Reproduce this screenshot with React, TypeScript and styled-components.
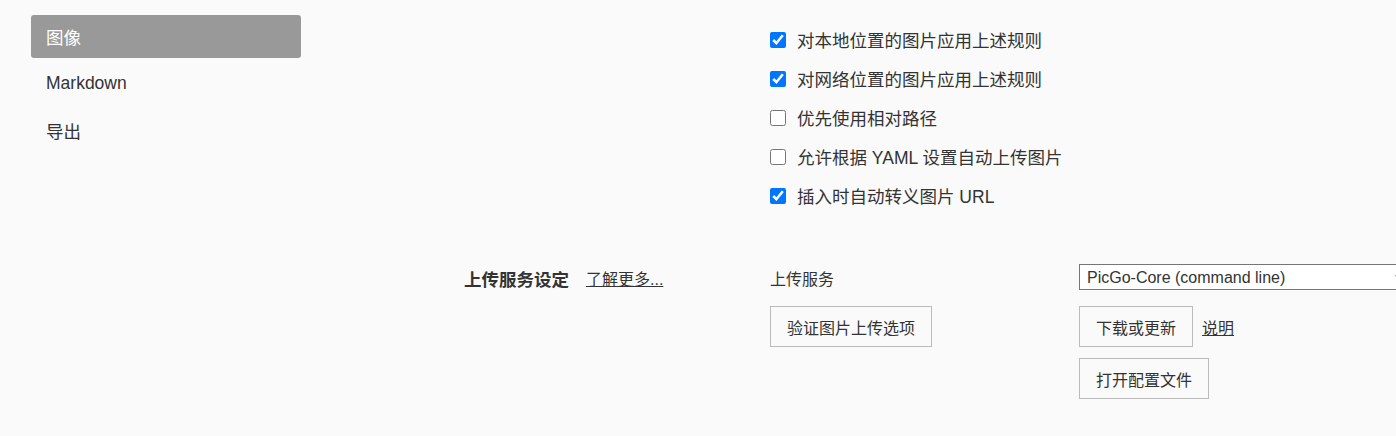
import React from "react";
import styled, { createGlobalStyle } from "styled-components";

const FONT = `"Liberation Sans", "Noto Sans CJK SC", sans-serif`;

const Global = createGlobalStyle`
  html, body { margin: 0; padding: 0; background: #fafafa; overflow: hidden; }
  body {
    font-family: ${FONT};
    color: #333;
    width: 1396px;
    height: 436px;
  }
`;

const Page = styled.div`
  display: flex;
  align-items: flex-start;
  padding: 15px 0 0 31px;
  width: 1396px;
  height: 436px;
  box-sizing: border-box;
  overflow: hidden;
`;

const Sidebar = styled.nav`
  width: 270px;
  flex: none;
  display: flex;
  flex-direction: column;
  gap: 4px;
`;

const NavItem = styled.div<{ $active?: boolean }>`
  height: 43px;
  display: flex;
  align-items: center;
  padding-left: 15px;
  border-radius: 3px;
  font-size: 17.5px;
  background: ${(p) => (p.$active ? "#999999" : "transparent")};
  color: ${(p) => (p.$active ? "#ffffff" : "#333333")};
`;

const Main = styled.main`
  flex: 1;
  display: flex;
  flex-direction: column;
  padding-top: 5px;
  min-width: 0;
`;

const CheckList = styled.div`
  display: flex;
  flex-direction: column;
  padding-left: 469px;
`;

const CheckRow = styled.label`
  height: 39px;
  display: flex;
  align-items: center;
  font-size: 17.5px;
  color: #333;
  white-space: nowrap;
`;

const Box = styled.input`
  width: 16px;
  height: 16px;
  margin: 0 11px 0 0;
  accent-color: #0075ff;
`;

const Section = styled.section`
  display: grid;
  grid-template-columns: 469px 309px auto;
  grid-template-rows: 26px 41px 41px;
  row-gap: 15px;
  margin-top: 50px;
  align-items: center;
`;

const SectionTitle = styled.div`
  grid-column: 1;
  grid-row: 1;
  display: flex;
  align-items: center;
  gap: 17px;
  padding-left: 163px;
  white-space: nowrap;
`;

const Heading = styled.h3`
  margin: 0;
  font-size: 17.5px;
  font-weight: 700;
  color: #333;
`;

const Link = styled.a`
  font-size: 16px;
  color: #333;
  text-decoration: underline;
  cursor: pointer;
`;

const FieldLabel = styled.div`
  font-size: 16px;
  color: #333;
`;

const Select = styled.select`
  width: 330px;
  height: 26px;
  font-family: ${FONT};
  font-size: 16px;
  color: #333;
  background: #fff;
  border: 1px solid #767676;
  border-radius: 0;
  padding: 0 3px;
`;

const Button = styled.button`
  height: 41px;
  padding: 0 16px;
  font-family: ${FONT};
  font-size: 16px;
  color: #333;
  background: #fafafa;
  border: 1px solid #bbbbbb;
  border-radius: 0;
  white-space: nowrap;
`;

const Cell = styled.div<{ $col: number; $row: number; $offset?: number }>`
  grid-column: ${(p) => p.$col};
  grid-row: ${(p) => p.$row};
  display: flex;
  align-items: center;
  gap: 9px;
  margin-top: ${(p) => p.$offset ?? 0}px;
`;

const checks: [string, boolean][] = [
  ["对本地位置的图片应用上述规则", true],
  ["对网络位置的图片应用上述规则", true],
  ["优先使用相对路径", false],
  ["允许根据 YAML 设置自动上传图片", false],
  ["插入时自动转义图片 URL", true],
];

export default function App() {
  return (
    <>
      <Global />
      <Page>
        <Sidebar>
          <NavItem $active>图像</NavItem>
          <NavItem>Markdown</NavItem>
          <NavItem>导出</NavItem>
        </Sidebar>
        <Main>
          <CheckList>
            {checks.map(([t, c]) => (
              <CheckRow key={t}>
                <Box type="checkbox" defaultChecked={c} />
                {t}
              </CheckRow>
            ))}
          </CheckList>
          <Section>
            <SectionTitle>
              <Heading>上传服务设定</Heading>
              <Link>了解更多...</Link>
            </SectionTitle>
            <Cell $col={2} $row={1} $offset={-1}>
              <FieldLabel>上传服务</FieldLabel>
            </Cell>
            <Cell $col={3} $row={1} $offset={-2}>
              <Select defaultValue="picgo-core">
                <option value="picgo-core">PicGo-Core (command line)</option>
              </Select>
            </Cell>
            <Cell $col={2} $row={2}>
              <Button>验证图片上传选项</Button>
            </Cell>
            <Cell $col={3} $row={2}>
              <Button>下载或更新</Button>
              <Link>说明</Link>
            </Cell>
            <Cell $col={3} $row={3} $offset={-8}>
              <Button>打开配置文件</Button>
            </Cell>
          </Section>
        </Main>
      </Page>
    </>
  );
}
